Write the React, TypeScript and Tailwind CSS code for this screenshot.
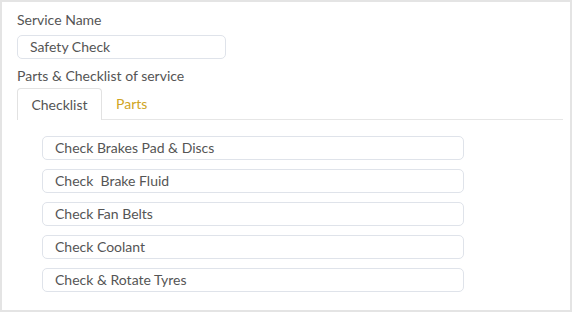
const ITEMS = [
  'Check Brakes Pad & Discs',
  'Check  Brake Fluid',
  'Check Fan Belts',
  'Check Coolant',
  'Check & Rotate Tyres',
]

export default function App() {
  return (
    <div className="w-[572px] h-[312px] bg-white font-['Lato',sans-serif] text-[14px] text-[#555]">
      <div className="w-full h-full border-2 border-[#e4e4e4] pl-[15px] pr-[7px] pt-[9px]">
        <div className="leading-[18px]">Service Name</div>
        <div className="mt-[6px] w-[209px] h-[24px] border border-[#dfe3ea] rounded-[5px] px-[12px] leading-[22px] whitespace-pre">
          Safety Check
        </div>
        <div className="mt-[8px] leading-[18px]">Parts &amp; Checklist of service</div>
        <div className="mt-[3px] flex items-end border-b border-[#e6e6e6] h-[32px]">
          <div className="h-[32px] w-[85px] -mb-px border border-b-0 border-[#e2e2e2] rounded-t-[4px] bg-white flex items-center justify-center">
            Checklist
          </div>
          <div className="h-[31px] px-[14px] flex items-center text-[#d0a523]">Parts</div>
        </div>
        <div className="pl-[25px] pt-[16px] flex flex-col gap-[9px]">
          {ITEMS.map(item => (
            <div
              key={item}
              className="w-[422px] h-[24px] border border-[#dfe3ea] rounded-[5px] px-[12px] leading-[22px] whitespace-pre"
            >
              {item}
            </div>
          ))}
        </div>
      </div>
    </div>
  )
}
